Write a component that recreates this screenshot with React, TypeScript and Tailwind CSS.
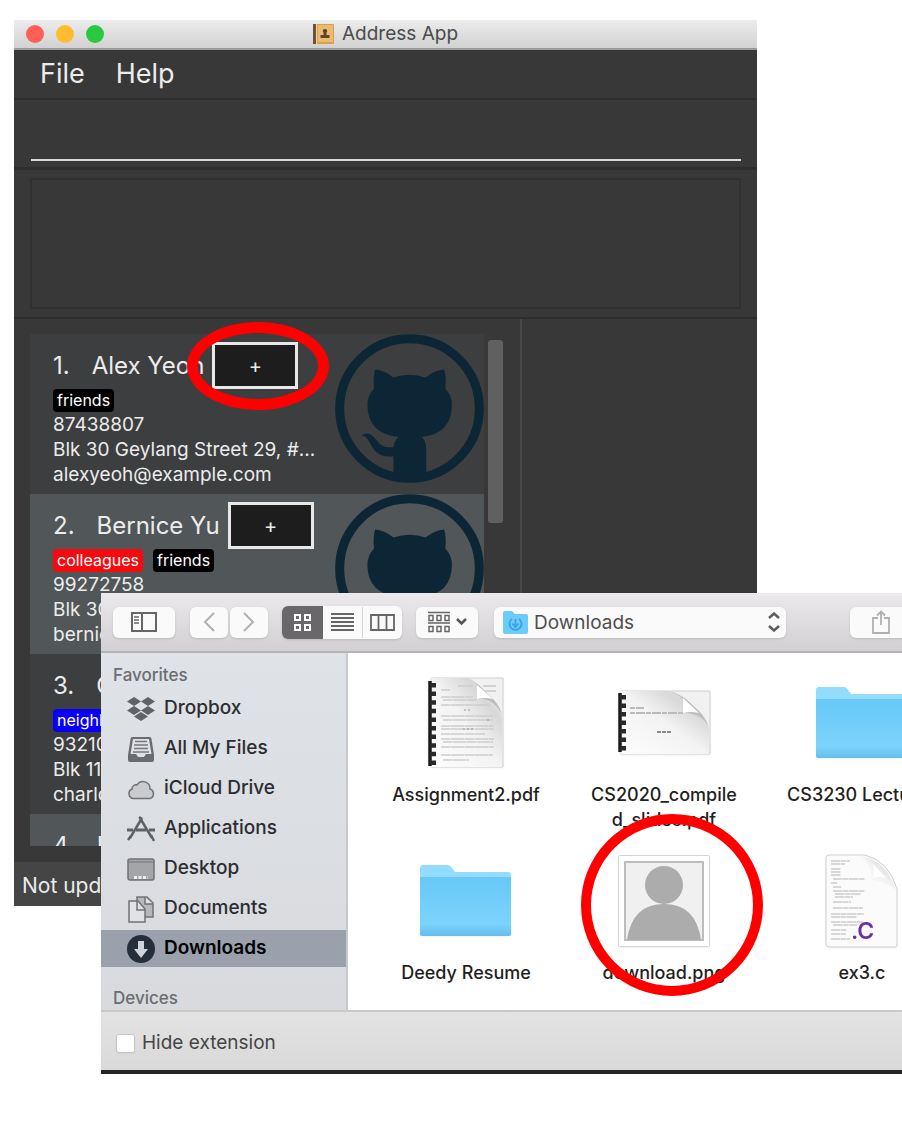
import React from "react";
import { FaDropbox } from "react-icons/fa";

type Person = {
  id: number;
  name: string;
  tags: { label: string; color: string }[];
  phone: string;
  address: string;
  email: string;
};

const people: Person[] = [
  {
    id: 1,
    name: "Alex Yeoh",
    tags: [{ label: "friends", color: "bg-black" }],
    phone: "87438807",
    address: "Blk 30 Geylang Street 29, #...",
    email: "alexyeoh@example.com",
  },
  {
    id: 2,
    name: "Bernice Yu",
    tags: [
      { label: "colleagues", color: "bg-[#f50a0f]" },
      { label: "friends", color: "bg-black" },
    ],
    phone: "99272758",
    address: "Blk 30 Lorong 3 Serangoon Gardens",
    email: "berniceyu@example.com",
  },
  {
    id: 3,
    name: "Charlotte Oliveiro",
    tags: [{ label: "neighbours", color: "bg-[#0a00f5]" }],
    phone: "93210283",
    address: "Blk 11 Ang Mo Kio Street 74",
    email: "charlotte@example.com",
  },
  {
    id: 4,
    name: "David Li",
    tags: [{ label: "family", color: "bg-black" }],
    phone: "91031282",
    address: "Blk 436 Serangoon Gardens Street 26",
    email: "lidavid@example.com",
  },
];

function Octocat() {
  return (
    <svg viewBox="0 0 446 446" className="h-[149px] w-[149px] shrink-0" aria-hidden="true">
      <circle cx="223" cy="223" r="209" fill="none" stroke="#0d2636" strokeWidth="27" />
      <path
        fill="#0d2636"
        d="M120 106 Q146 107 175 130 Q223 114 271 130 Q300 107 327 106 Q334 133 330 163 Q351 184 350 215 Q348 299 260 308 Q273 320 273 345 V420 H175 V366 Q136 370 117 347 Q105 328 98 315 Q91 305 80 303 Q90 295 105 300 Q118 307 129 323 Q143 342 175 338 Q177 320 190 308 Q99 299 97 215 Q96 184 117 163 Q113 133 120 106Z"
      />
    </svg>
  );
}

function PersonCard({ person, marked }: { person: Person; marked?: boolean }) {
  return (
    <li className="flex h-40 shrink-0 odd:bg-[#3c3e3f] even:bg-[#515658]">
      <div className="min-w-0 flex-1 pt-2 pl-[23px]">
        <div className="flex items-center text-2xl whitespace-nowrap">
          <span>{person.id}.</span>
          <span className="ml-[22px]">{person.name}</span>
          <span className="relative ml-2">
            <button
              type="button"
              aria-label={`Add photo for ${person.name}`}
              className="flex h-[47px] w-[86px] items-center justify-center border-[3px] border-[#e8e8e8] bg-[#1d1d1d] text-xl"
            >
              +
            </button>
            {marked && (
              <span className="absolute -top-5 -left-[25px] z-10 h-[88px] w-[142px] rounded-[50%] border-[11px] border-[#ff0000]" />
            )}
          </span>
        </div>
        <div className="flex gap-2.5">
          {person.tags.map((tag) => (
            <span
              key={tag.label}
              className={`h-[23px] rounded-sm px-1 text-base leading-[22px] text-white ${tag.color}`}
            >
              {tag.label}
            </span>
          ))}
        </div>
        <div className="text-[19px] leading-[25px]">
          <p>{person.phone}</p>
          <p className="truncate">{person.address}</p>
          <p>{person.email}</p>
        </div>
      </div>
      <Octocat />
    </li>
  );
}

function AddressWindow() {
  return (
    <section className="mr-[145px] ml-3.5 flex flex-col bg-[#383838] text-[#ececec]">
      <header className="relative flex h-[30px] items-center justify-center border-b-2 border-[#9a9a9a] bg-linear-to-b from-[#ececec] to-[#d2d2d2]">
        <div className="absolute left-3 flex gap-3">
          <button type="button" aria-label="Close" className="size-[18px] rounded-full bg-[#ff5f57]" />
          <button type="button" aria-label="Minimize" className="size-[18px] rounded-full bg-[#ffbd2e]" />
          <button type="button" aria-label="Zoom" className="size-[18px] rounded-full bg-[#28c940]" />
        </div>
        <h1 className="flex items-center gap-2 text-[19px] text-[#4b4b4d]">
          <svg viewBox="0 0 21 20" className="h-5 w-[21px]" aria-hidden="true">
            <rect width="21" height="20" rx="1" fill="#d99f4c" />
            <rect x="5" y="1" width="15" height="17" fill="#e9bc71" />
            <rect width="3" height="20" fill="#6e5138" />
            <rect x="3" width="1" height="20" fill="#f1d9ad" />
            <path d="M12 5a2 2 0 0 1 1.500 3.500L13.500 11H16.500v3H7.500v-3H10.500L10.500 8.500A2 2 0 0 1 12 5Z" fill="#60462d" />
          </svg>
          Address App
        </h1>
      </header>
      <nav className="flex h-12 items-center gap-[31px] pl-[26px] text-[27px]">
        <button type="button">File</button>
        <button type="button">Help</button>
      </nav>
      <div className="h-[72px] border-t-2 border-b-3 border-[#2d2d2d] pr-4 pl-[17px]">
        <input
          aria-label="Command"
          className="h-[61px] w-full border-b-2 border-[#d8d8d8] bg-transparent text-xl outline-none"
        />
      </div>
      <div className="h-[149px] border-b-2 border-[#2d2d2d] px-4 pt-2">
        <div className="h-[131px] border-2 border-[#303030]" role="log" aria-label="Result" />
      </div>
      <div className="flex">
        <div className="flex h-[543px] w-[508px] shrink-0 gap-1 border-r-2 border-[#484848] pb-4 pl-4">
          <ul className="flex w-[454px] flex-col overflow-hidden pt-[15px]">
            {people.map((person) => (
              <PersonCard key={person.id} person={person} marked={person.id === 1} />
            ))}
          </ul>
          <div className="mt-[21px] h-[183px] w-[15px] rounded-[3px] bg-[#606060]" />
        </div>
        <div className="flex-1" />
      </div>
      <footer className="h-11 bg-[#454545] pl-2 text-[21px] leading-[48px]">Not updated yet in this session</footer>
    </section>
  );
}

function AllFilesIcon() {
  return (
    <svg viewBox="0 0 28 28" className="size-7" aria-hidden="true">
      <path d="M5 2h18q1 0 1.500 2L27 20v5q0 2-2 2H3q-2 0-2-2v-5L3.500 4Q4 2 5 2Z" fill="#6a6c70" />
      <path d="M6 4h16l2.500 15H19l-2 3h-6l-2-3H3.500Z" fill="#dfe1e4" />
      <path d="M8 6.500h12M7 10h14M7 13.500h14M6 17h16" stroke="#76787c" strokeWidth="1.500" />
    </svg>
  );
}

function CloudIcon() {
  return (
    <svg viewBox="0 0 28 28" className="size-7" aria-hidden="true">
      <path
        d="M6 23.500a5 5 0 0 1-1-9.500 4 4 0 0 1 5-4 7 7 0 0 1 13 4 5 5 0 0 1 0 9.500Z"
        fill="#c9cbce"
        stroke="#707276"
        strokeWidth="1.500"
      />
    </svg>
  );
}

function ApplicationsIcon() {
  return (
    <svg viewBox="0 0 28 28" className="size-7" fill="none" stroke="#606266" aria-hidden="true">
      <path d="M13 3 25 23M15 3 3 23" strokeWidth="2.500" />
      <path d="m12 2 3 2M24 20l3 6M4 21l-3 4" strokeWidth="2.500" />
      <path d="M0 15h6M9 15h10M22 15h6" strokeWidth="3" />
    </svg>
  );
}

function DesktopIcon() {
  return (
    <svg viewBox="0 0 28 28" className="size-7" aria-hidden="true">
      <rect x="1" y="4" width="26" height="21" rx="2" fill="#a3a5a8" stroke="#707276" strokeWidth="1.500" />
      <path d="M2 7h24" stroke="#707276" />
      <path d="M7 22.500h14" stroke="#eee" strokeWidth="3" strokeDasharray="3 1.500" />
    </svg>
  );
}

function DocumentsIcon() {
  return (
    <svg viewBox="0 0 28 28" className="size-7" stroke="#707276" strokeWidth="1.500" aria-hidden="true">
      <path d="M10 2h10l6 6v14H10Z" fill="#b6b8bb" />
      <path d="M18 2v7h8" fill="#dfe1e4" />
      <path d="M2 6h9l7 8v13H2Z" fill="#e0e2e5" />
      <path d="M10 6v9h8" fill="none" />
    </svg>
  );
}

function DownloadsIcon() {
  return (
    <svg viewBox="0 0 28 28" className="size-7" aria-hidden="true">
      <circle cx="14" cy="14" r="14" fill="#252e3b" />
      <path d="M11 6h6v8h4l-7 9-7-9h4Z" fill="#cfd4dc" />
    </svg>
  );
}

const places = [
  { label: "Dropbox", icon: <FaDropbox className="size-7 text-[#606266]" /> },
  { label: "All My Files", icon: <AllFilesIcon /> },
  { label: "iCloud Drive", icon: <CloudIcon /> },
  { label: "Applications", icon: <ApplicationsIcon /> },
  { label: "Desktop", icon: <DesktopIcon /> },
  { label: "Documents", icon: <DocumentsIcon /> },
  { label: "Downloads", icon: <DownloadsIcon />, active: true },
];

function Folder() {
  return (
    <svg viewBox="0 0 94 76" className="h-[76px] w-[94px] drop-shadow-xs" aria-hidden="true">
      <defs>
        <linearGradient id="folder" x1="0" y1="0" x2="0" y2="1">
          <stop offset="0" stopColor="#67c8f7" />
          <stop offset="0.800" stopColor="#7cd3fb" />
          <stop offset="1" stopColor="#62bfed" />
        </linearGradient>
      </defs>
      <path d="M1 5q0-3 3-3h25q2 0 4 3l3 4h53q3 0 3 3v20H1Z" fill="#94dcfd" />
      <path d="M1 14h91v57q0 2-2 2H3q-2 0-2-2Z" fill="url(#folder)" />
    </svg>
  );
}

function pageShade(id: string) {
  return (
    <linearGradient id={id} x1="0" y1="1" x2="1" y2="0">
      <stop offset="0" stopColor="#fdfdfd" />
      <stop offset="0.500" stopColor="#f3f3f3" />
      <stop offset="0.750" stopColor="#d8d8d8" />
      <stop offset="1" stopColor="#f0f0f0" />
    </linearGradient>
  );
}

function BoundReport() {
  return (
    <svg viewBox="0 0 78 92" className="h-[92px] w-[78px] drop-shadow-xs" aria-hidden="true">
      <defs>{pageShade("report")}</defs>
      <path d="M4 1h72v89H4Z" fill="#f1f1f1" stroke="#d0d0d0" />
      <path d="M4 1h36q8 2 20 16 14 11 15 24v49H4Z" fill="url(#report)" />
      <path d="M40 1Q47 4 50 8v14q10-1 17 5 7 6 8 12-1-8-8-16L54 10Q46 3 40 1Z" fill="#bdbdbd" />
      <path d="M50 8 66 22q-8-2-16 0Z" fill="#fff" />
      <path d="M31 9h15M56 9h13M58 14h11" stroke="#d2d2d2" strokeWidth="2" />
      <path
        d="M14 13h9M14 20h32M16 23h34M14 28h50M14 39h52M16 43h50M14 49h53M14 52h53M14 57h44M14 62h53M16 65h50M14 70h53M14 78h52M16 83h26"
        stroke="#cdcdcd"
        strokeWidth="1.500"
        strokeDasharray="9 0.500 14 0.500"
      />
      <path d="M37 33h8M36 52h10M60 43h3" stroke="#999" strokeDasharray="2 2" />
      <path d="M3 4v85" stroke="#1a1a1a" strokeWidth="3.500" />
      <path d="M6 6v83" stroke="#2a2a2a" strokeWidth="6" strokeDasharray="4.500 4.100" />
    </svg>
  );
}

function BoundSlides() {
  return (
    <svg viewBox="0 0 94 66" className="h-[66px] w-[94px] drop-shadow-xs" aria-hidden="true">
      <defs>{pageShade("slides")}</defs>
      <path d="M4 1h89v63H4Z" fill="#f1f1f1" stroke="#d0d0d0" />
      <path d="M4 1h49q10 3 22 16 14 10 17 22v25H4Z" fill="url(#slides)" />
      <path d="M53 1Q62 5 66 9v14q10 0 17 4 7 5 9 11-2-8-9-16L69 9Q60 3 53 1Z" fill="#bdbdbd" />
      <path d="M66 8 82 23q-8-2-16 0Z" fill="#fff" />
      <path d="M13 18h14M13 23h53" stroke="#bbb" strokeWidth="2" strokeDasharray="5 1 9 1" />
      <path d="M40 42h15" stroke="#8a8a8a" strokeWidth="2" strokeDasharray="4 1" />
      <path d="M3 3v59" stroke="#1a1a1a" strokeWidth="3.500" />
      <path d="M6 5v57" stroke="#2a2a2a" strokeWidth="6" strokeDasharray="4.500 4" />
    </svg>
  );
}

function Portrait() {
  return (
    <svg viewBox="0 0 92 92" className="size-[92px] drop-shadow-xs" aria-hidden="true">
      <rect x="0.500" y="0.500" width="91" height="91" rx="1" fill="#fff" stroke="#d6d6d6" />
      <rect x="7" y="7" width="78" height="78" fill="#f0f0f0" stroke="#bdbdbd" strokeWidth="2" />
      <circle cx="46" cy="30" r="19" fill="#acacac" />
      <path d="M9 85q5-36 37-36t37 36Z" fill="#acacac" />
    </svg>
  );
}

function SourceFile() {
  return (
    <svg viewBox="0 0 74 94" className="h-[94px] w-[74px] drop-shadow-xs" aria-hidden="true">
      <defs>{pageShade("source")}</defs>
      <path d="M4 1h36q24 6 32 34v56q0 2-2 2H4q-3 0-3-3V4q0-3 3-3Z" fill="#fbfbfb" stroke="#cfcfcf" />
      <path d="M37 2q9 9 10 24 15 1 24 11Q62 7 37 2Z" fill="url(#source)" />
      <path d="M48 10q2 7-1 14 8-2 14 0Z" fill="#fff" />
      <path
        d="M6 7h19M6 10h14M6 15h10M6 18h10M6 21h10M8 25h32M6 29h6M8 33h8M8 37h32M10 40h26M10 43h18M8 48h18M8 54h30M6 60h33M6 63h26M6 68h32M8 71h24M6 76h16M6 80h15M6 85h19"
        stroke="#cccccc"
        strokeWidth="1.300"
        strokeDasharray="9 0.500 6 0.500"
      />
      <text x="26" y="85" fill="#6b2fa0" fontFamily="Inter, sans-serif" fontWeight="600" fontSize="23">
        .C
      </text>
    </svg>
  );
}

const files = [
  { lines: ["Assignment2.pdf"], icon: <BoundReport /> },
  { lines: ["CS2020_compile", "d_slides.pdf"], icon: <BoundSlides /> },
  { lines: ["CS3230 Lectures"], icon: <Folder /> },
  { lines: ["Deedy Resume"], icon: <Folder /> },
  { lines: ["download.png"], icon: <Portrait />, marked: true },
  { lines: ["ex3.c"], icon: <SourceFile /> },
];

function FileDialog() {
  return (
    <section className="absolute top-[593px] right-0 left-[101px] overflow-hidden border-b-4 border-[#242526] bg-white">
      <div className="flex h-[60px] items-center overflow-hidden border-b-2 border-[#b5b3b5] bg-linear-to-b from-[#ebe9eb] to-[#d2d0d2] pl-3 *:shrink-0">
        <button
          type="button"
          aria-label="Toggle sidebar"
          className="flex h-[31px] w-[62px] items-center justify-center rounded-md bg-[#fafafa] shadow-sm"
        >
          <svg viewBox="0 0 26 20" className="h-5 w-[26px]" fill="none" stroke="#666" aria-hidden="true">
            <rect x="1" y="1" width="24" height="18" strokeWidth="2" />
            <path d="M11 1v18" strokeWidth="2" />
            <path d="M3 5h5M3 8h5M3 11h5" strokeWidth="1.500" />
          </svg>
        </button>
        <div className="ml-[15px] flex gap-0.5">
          <button
            type="button"
            aria-label="Back"
            className="flex h-[31px] w-[38px] items-center justify-center rounded-md bg-[#fafafa] shadow-sm"
          >
            <svg viewBox="0 0 12 20" className="h-5 w-3" fill="none" stroke="#b0b0b0" strokeWidth="2" aria-hidden="true">
              <path d="m11 1-9 9 9 9" />
            </svg>
          </button>
          <button
            type="button"
            aria-label="Forward"
            className="flex h-[31px] w-[38px] items-center justify-center rounded-md bg-[#fafafa] shadow-sm"
          >
            <svg viewBox="0 0 12 20" className="h-5 w-3" fill="none" stroke="#b0b0b0" strokeWidth="2" aria-hidden="true">
              <path d="m1 1 9 9-9 9" />
            </svg>
          </button>
        </div>
        <div className="ml-3.5 flex items-center overflow-hidden rounded-md bg-[#fafafa] shadow-sm">
          <button
            type="button"
            aria-label="Icon view"
            className="flex h-[33px] w-[41px] items-center justify-center bg-[#696769]"
          >
            <svg viewBox="0 0 17 17" className="size-[17px]" fill="none" stroke="#fff" strokeWidth="2" aria-hidden="true">
              <path d="M1 1h5v5H1ZM11 1h5v5h-5ZM1 11h5v5H1ZM11 11h5v5h-5Z" />
            </svg>
          </button>
          <button type="button" aria-label="List view" className="flex h-[31px] w-[39px] items-center justify-center">
            <svg viewBox="0 0 23 18" className="h-[18px] w-[23px]" stroke="#666" strokeWidth="1.800" aria-hidden="true">
              <path d="M0 1h23M0 5h23M0 9h23M0 13h23M0 17h23" />
            </svg>
          </button>
          <button
            type="button"
            aria-label="Column view"
            className="flex h-[31px] w-10 items-center justify-center border-l border-[#d5d5d5]"
          >
            <svg viewBox="0 0 25 17" className="h-[17px] w-[25px]" fill="none" stroke="#666" strokeWidth="1.800" aria-hidden="true">
              <path d="M1 1h23v15H1ZM8.500 1v15M16.500 1v15" />
            </svg>
          </button>
        </div>
        <button
          type="button"
          aria-label="Arrange items"
          className="ml-3.5 flex h-[31px] w-[62px] items-center justify-center gap-1.5 rounded-md bg-[#fafafa] shadow-sm"
        >
          <svg viewBox="0 0 22 22" className="size-[22px]" fill="none" stroke="#666" strokeWidth="1.500" aria-hidden="true">
            <path d="M0 1.500h22M0 12h22" />
            <path d="M1 4.500h4v5H1ZM9 4.500h4v5H9ZM17 4.500h4v5h-4ZM1 15.500h4v5H1ZM9 15.500h4v5H9ZM17 15.500h4v5h-4Z" />
          </svg>
          <svg viewBox="0 0 11 8" className="h-2 w-[11px]" fill="none" stroke="#555" strokeWidth="2.500" aria-hidden="true">
            <path d="m1 1 4.500 4.500L10 1" />
          </svg>
        </button>
        <div className="relative ml-4 w-[292px]">
          <select
            aria-label="Folder"
            className="h-[31px] w-full appearance-none rounded-md bg-[#fafafa] pl-10 text-[19px] leading-[31px] text-[#4e4e50] shadow-sm"
          >
            <option>Downloads</option>
          </select>
          <svg viewBox="0 0 25 23" className="absolute top-1 left-[9px] h-[23px] w-[25px]" aria-hidden="true">
            <path d="M0 2q0-2 2-2h7l3 3h11q2 0 2 2v16q0 2-2 2H2q-2 0-2-2Z" fill="#6ccbf8" />
            <path
              d="M9 8a6 6 0 1 0 7 0M12.500 8v6M9.500 12.500l3 3.500 3-3.500"
              fill="none"
              stroke="#35a4e0"
              strokeWidth="1.800"
            />
          </svg>
          <svg
            viewBox="0 0 12 20"
            className="absolute top-[5px] right-1.5 h-5 w-3"
            fill="none"
            stroke="#5c5c5c"
            strokeWidth="2.500"
            aria-hidden="true"
          >
            <path d="m1 6 5-4.500L11 6M1 14l5 4.500 5-4.500" />
          </svg>
        </div>
        <button
          type="button"
          aria-label="Share"
          className="ml-16 flex h-[31px] w-[62px] items-center justify-center rounded-md bg-[#fafafa] shadow-sm"
        >
          <svg viewBox="0 0 18 24" className="h-6 w-[18px]" fill="none" stroke="#b0b0b0" strokeWidth="1.800" aria-hidden="true">
            <path d="M6 8H1v15h16V8h-5M9 15V2M5 5.500 9 1.500l4 4" />
          </svg>
        </button>
      </div>
      <div className="flex h-[357px] overflow-hidden">
        <aside className="w-[247px] shrink-0 border-r-2 border-[#c6c8cb] bg-linear-to-b from-[#dfe2e6] to-[#d8dade] pt-2.5">
          <h2 className="pl-3 text-[17px] leading-6 font-medium text-[#6b6d71]">Favorites</h2>
          <ul className="mt-[3px] flex flex-col gap-[3px]">
            {places.map((place) => (
              <li key={place.label}>
                <a
                  href="#"
                  className={`flex h-[37px] items-center gap-[9px] pl-[26px] text-[19px] ${
                    place.active ? "bg-[#9aa1ad] font-semibold text-black" : "font-medium text-[#2c2d30]"
                  }`}
                >
                  {place.icon}
                  {place.label}
                </a>
              </li>
            ))}
          </ul>
          <h2 className="mt-[19px] pl-3 text-[17px] leading-6 font-medium text-[#6b6d71]">Devices</h2>
        </aside>
        <ul className="grid shrink-0 auto-rows-[178px] grid-cols-[repeat(3,198px)] pt-[23px] pl-[19px] text-lg leading-[25px] font-medium text-[#1f1f21]">
          {files.map((file) => (
            <li key={file.lines[0]} className="relative flex flex-col items-center gap-[13px]">
              <div className="flex h-[93px] items-center">{file.icon}</div>
              <p className="text-center leading-[25px] whitespace-nowrap">
                {file.lines.map((line) => (
                  <span key={line} className="block">
                    {line}
                  </span>
                ))}
              </p>
              {file.marked && (
                <span className="absolute -top-10 left-4 size-[182px] rounded-full border-[10px] border-[#ff0000]" />
              )}
            </li>
          ))}
        </ul>
      </div>
      <footer className="flex h-[60px] items-center border-t-2 border-[#c9c9c9] bg-linear-to-b from-[#e3e3e3] to-[#d9d9d9] pl-[15px] pt-1">
        <input
          id="hide-extension"
          type="checkbox"
          className="size-[19px] appearance-none rounded-[3px] border border-[#c4c4c4] bg-white shadow-xs"
        />
        <label htmlFor="hide-extension" className="pl-[7px] text-[19px] text-[#454545]">
          Hide extension
        </label>
      </footer>
    </section>
  );
}

export default function App() {
  return (
    <main className="relative min-h-screen overflow-hidden bg-white pt-5 font-['Inter',sans-serif]">
      <AddressWindow />
      <FileDialog />
    </main>
  );
}
